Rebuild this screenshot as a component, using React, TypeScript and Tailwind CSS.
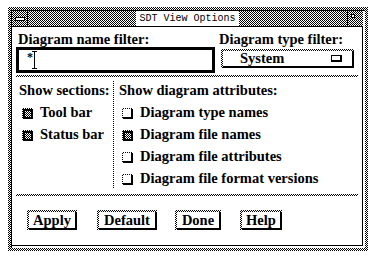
const dither = "bg-[image:repeating-conic-gradient(#000_0_25%,#fff_0_50%)] bg-[length:2px_2px]";

function CheckBox({ on }: { on?: boolean }) {
  if (on) {
    return (
      <div className={`w-[11px] h-[11px] ${dither} pt-px pl-px`}>
        <div className="w-full h-full bg-black p-[2px]">
          <div className={`w-full h-full ${dither}`} />
        </div>
      </div>
    );
  }
  return (
    <div className={`w-[11px] h-[11px] ${dither} pt-px pl-px`}>
      <div className="w-full h-full bg-white border-r-2 border-b-2 border-black" />
    </div>
  );
}

function PushButton({ label, w }: { label: string; w: string }) {
  return (
    <div className={`${w} h-[20px] ${dither} pt-[2px] pl-[2px]`}>
      <div className="h-full bg-white border-r-2 border-b-2 border-black flex items-center justify-center leading-none">
        {label}
      </div>
    </div>
  );
}

function Row({ on, label, pl }: { on?: boolean; label: string; pl: string }) {
  return (
    <div className={`h-[22px] flex items-center ${pl} gap-[7px]`}>
      <CheckBox on={on} />
      <span>{label}</span>
    </div>
  );
}

export default function App() {
  return (
    <div className="w-[376px] h-[258px] bg-white pt-[7px] pl-[8px] font-['Liberation_Serif',serif] font-bold text-[14.5px] text-black">
      <div className={`w-[360px] h-[244px] ${dither} p-[3px]`}>
        <div className="h-full bg-white border-l border-t border-black pr-[2px] pb-[2px] flex flex-col">
          {/* title bar */}
          <div className="h-[16px] border-b border-black flex">
            <div className={`w-[16px] border-r border-black ${dither} flex items-center justify-center`}>
              <div className="w-[10px] h-[4px] bg-white border border-black" />
            </div>
            <div className={`flex-1 ${dither} flex justify-center`}>
              <div className="bg-white px-[3px] font-['Liberation_Mono',monospace] font-normal text-[10px] leading-[15px]">
                SDT View Options
              </div>
            </div>
            <div className={`w-[16px] border-l border-black ${dither} pt-[3px] pl-[3px]`}>
              <div className="w-[4px] h-[4px] bg-white border border-black" />
            </div>
          </div>

          {/* dialog body */}
          <div className="flex-1 flex flex-col border-r border-b border-black">
            <div className="flex pt-[4px]">
              <div className="ml-[4px] w-[199px]">
                <div className="h-[16px] leading-[16px] pl-[2px]">Diagram name filter:</div>
                <div className="h-[26px] border-[3px] border-black bg-white flex items-start pl-[8px] pt-[1px]">
                  <span className="text-[12px] leading-[12px]">*</span>
                  <svg width="5" height="18" className="-ml-[1px]">
                    <path d="M0 0.5H5M2.5 0V18M0 17.5H5" stroke="#000" strokeWidth="1" />
                  </svg>
                </div>
              </div>
              <div className="ml-[6px] w-[133px]">
                <div className="h-[16px] leading-[16px] -ml-[2px]">Diagram type filter:</div>
                <div className={`mt-[2px] h-[19px] ${dither} pt-[2px] pl-[2px]`}>
                  <div className="h-full bg-white border-r-2 border-b-2 border-black flex items-center leading-none">
                    <span className="ml-[17px]">System</span>
                    <div className="ml-auto mr-[10px] w-[11px] h-[7px] bg-white border border-black border-r-2 border-b-2" />
                  </div>
                </div>
              </div>
            </div>

            <div className={`mx-[4px] mt-[2px] h-[2px] ${dither}`} />

            <div className="h-[117px] flex">
              <div className="w-[101px]">
                <div className="mt-[5px] h-[16px] leading-[16px] pl-[7px]">Show sections:</div>
                <div className="mt-[4px]">
                  <Row on label="Tool bar" pl="pl-[10px]" />
                  <Row on label="Status bar" pl="pl-[10px]" />
                </div>
              </div>
              <div className={`w-px mt-[3px] mb-[5px] ${dither}`} />
              <div className="flex-1">
                <div className="mt-[5px] h-[16px] leading-[16px] pl-[5px]">Show diagram attributes:</div>
                <div className="mt-[4px]">
                  <Row label="Diagram type names" pl="pl-[8px]" />
                  <Row on label="Diagram file names" pl="pl-[8px]" />
                  <Row label="Diagram file attributes" pl="pl-[8px]" />
                  <Row label="Diagram file format versions" pl="pl-[8px]" />
                </div>
              </div>
            </div>

            <div className={`mx-[4px] h-[2px] ${dither}`} />

            <div className="mt-[14px] pl-[15px] flex">
              <PushButton label="Apply" w="w-[50px]" />
              <div className="ml-[20px]"><PushButton label="Default" w="w-[60px]" /></div>
              <div className="ml-[18px]"><PushButton label="Done" w="w-[46px]" /></div>
              <div className="ml-[19px]"><PushButton label="Help" w="w-[42px]" /></div>
            </div>
          </div>
        </div>
      </div>
    </div>
  );
}
